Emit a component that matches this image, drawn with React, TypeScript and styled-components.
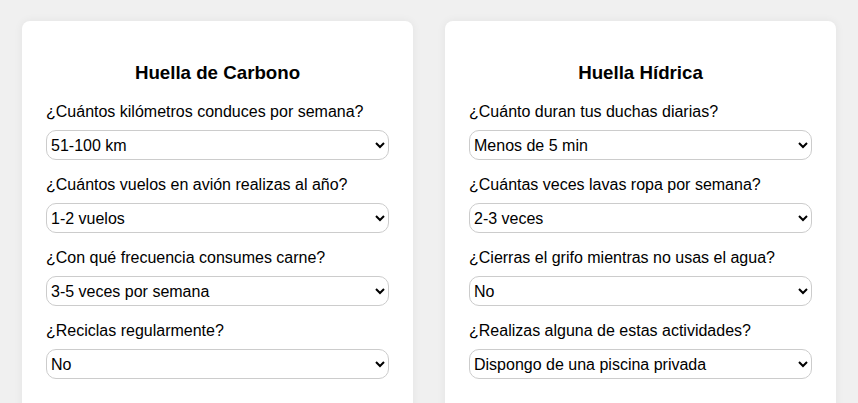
import React from 'react';
import {styled, createGlobalStyle} from 'styled-components';

const GlobalStyle = createGlobalStyle`
  body {
    margin: 0;
    background: #f0f0f0;
    font-family: "Liberation Sans", Arial, sans-serif;
  }
`;

interface Question {
  label: string;
  options: string[];
  value: string;
}

const carbono: Question[] = [
  {
    label: '¿Cuántos kilómetros conduces por semana?',
    options: ['0-50 km', '51-100 km', '101-200 km', 'Más de 200 km'],
    value: '51-100 km',
  },
  {
    label: '¿Cuántos vuelos en avión realizas al año?',
    options: ['Ninguno', '1-2 vuelos', '3-5 vuelos', 'Más de 5 vuelos'],
    value: '1-2 vuelos',
  },
  {
    label: '¿Con qué frecuencia consumes carne?',
    options: ['Nunca', '1-2 veces por semana', '3-5 veces por semana', 'Diariamente'],
    value: '3-5 veces por semana',
  },
  {
    label: '¿Reciclas regularmente?',
    options: ['Sí', 'No'],
    value: 'No',
  },
];

const hidrica: Question[] = [
  {
    label: '¿Cuánto duran tus duchas diarias?',
    options: ['Menos de 5 min', '5-10 min', 'Más de 10 min'],
    value: 'Menos de 5 min',
  },
  {
    label: '¿Cuántas veces lavas ropa por semana?',
    options: ['1 vez', '2-3 veces', 'Más de 3 veces'],
    value: '2-3 veces',
  },
  {
    label: '¿Cierras el grifo mientras no usas el agua?',
    options: ['Sí', 'No'],
    value: 'No',
  },
  {
    label: '¿Realizas alguna de estas actividades?',
    options: ['Ninguna', 'Riego un jardín', 'Dispongo de una piscina privada'],
    value: 'Dispongo de una piscina privada',
  },
];

function Section({title, questions}: {title: string; questions: Question[]}) {
  return (
    <Card>
      <Title>{title}</Title>
      {questions.map((q) => (
        <Field key={q.label}>
          <Label>{q.label}</Label>
          <Select defaultValue={q.value}>
            {q.options.map((o) => (
              <option key={o}>{o}</option>
            ))}
          </Select>
        </Field>
      ))}
    </Card>
  );
}

export default function App() {
  return (
    <>
      <GlobalStyle />
      <Page>
        <Section title="Huella de Carbono" questions={carbono} />
        <Section title="Huella Hídrica" questions={hidrica} />
      </Page>
    </>
  );
}

const Page = styled.div`
  display: grid;
  grid-template-columns: 391px 391px;
  gap: 32px;
  padding: 21px 22px;
`;

const Card = styled.div`
  background: #fff;
  border-radius: 8px;
  box-shadow: 0 0 10px rgba(0, 0, 0, 0.06);
  padding: 41px 24px 24px;
  height: 420px;
  box-sizing: border-box;
`;

const Title = styled.h3`
  margin: 0 0 19px;
  font-size: 18.72px;
  font-weight: bold;
  text-align: center;
  color: #000;
`;

const Field = styled.div`
  margin-bottom: 16px;
`;

const Label = styled.label`
  display: block;
  font-size: 16px;
  color: #000;
  margin-bottom: 9px;
`;

const Select = styled.select`
  display: block;
  width: 100%;
  height: 30px;
  box-sizing: border-box;
  border: 1px solid #ccc;
  border-radius: 10px;
  background: #fff;
  font-family: "Liberation Sans", Arial, sans-serif;
  font-size: 16px;
  color: #000;
  padding: 0;
`;
